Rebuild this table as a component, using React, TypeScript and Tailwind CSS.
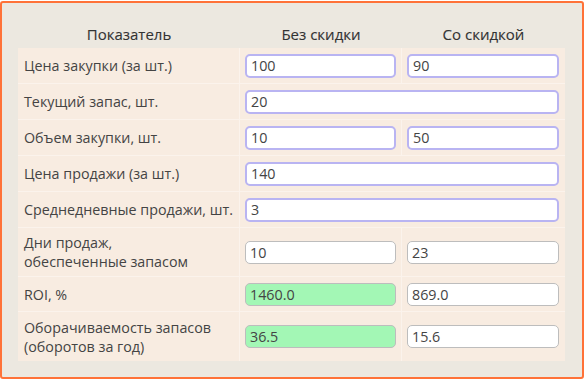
import React from "react";

type Row = {
  label: React.ReactNode;
  h: string;
  a: string;
  b?: string;
  kind: "edit" | "out";
  best?: boolean;
};

const rows: Row[] = [
  { label: "Цена закупки (за шт.)", h: "h-[36px]", a: "100", b: "90", kind: "edit" },
  { label: "Текущий запас, шт.", h: "h-[36px]", a: "20", kind: "edit" },
  { label: "Объем закупки, шт.", h: "h-[36px]", a: "10", b: "50", kind: "edit" },
  { label: "Цена продажи (за шт.)", h: "h-[36px]", a: "140", kind: "edit" },
  { label: "Среднедневные продажи, шт.", h: "h-[36px]", a: "3", kind: "edit" },
  {
    label: (
      <>
        Дни продаж,
        <br />
        обеспеченные запасом
      </>
    ),
    h: "h-[49px]",
    a: "10",
    b: "23",
    kind: "out",
  },
  { label: "ROI, %", h: "h-[35px]", a: "1460.0", b: "869.0", kind: "out", best: true },
  {
    label: (
      <>
        Оборачиваемость запасов
        <br />
        (оборотов за год)
      </>
    ),
    h: "h-[49px]",
    a: "36.5",
    b: "15.6",
    kind: "out",
    best: true,
  },
];

function Field({ value, kind, best }: { value: string; kind: "edit" | "out"; best?: boolean }) {
  const base =
    "w-full px-[4px] text-[14.3px] text-[#444] outline-none font-['Open_Sans',sans-serif]";
  const skin =
    kind === "edit"
      ? "h-[24px] bg-white border-2 border-[#b9b4f2] rounded-[5px]"
      : best
      ? "bg-[#a3f7b5] border-[1.5px] border-[#bdbdbd] rounded-[5px] h-[23px]"
      : "bg-white border-[1.5px] border-[#bdbdbd] rounded-[5px] h-[23px]";
  return <input className={`${base} ${skin}`} defaultValue={value} readOnly={kind === "out"} />;
}

export default function App() {
  return (
    <div className="w-[585px] h-[381px] bg-white font-['Open_Sans',sans-serif]">
      <div className="mt-[1px] w-[584px] h-[378px] border-2 border-[#ff7238] rounded-[3px] bg-[#ece8e0] pt-[16px] pl-[16px]">
        <div className="w-[547px] grid grid-cols-[222px_162px_163px]">
          {/* header */}
          <div className="h-[29px] pt-[2px] flex items-center justify-center text-[15px] text-[#333] [-webkit-text-stroke:0.12px_#333]">
            Показатель
          </div>
          <div className="h-[29px] pt-[2px] flex items-center justify-center text-[15px] text-[#333] [-webkit-text-stroke:0.12px_#333]">
            Без скидки
          </div>
          <div className="h-[29px] pt-[2px] flex items-center justify-center text-[15px] text-[#333] [-webkit-text-stroke:0.12px_#333]">
            Со скидкой
          </div>

          {rows.map((r, i) => {
            const last = i === rows.length - 1;
            const line = last ? "" : "border-b border-[#fbf3ec]";
            return (
              <React.Fragment key={i}>
                <div
                  className={`${r.h} ${line} border-r border-r-[#fbf3ec] bg-[#f8ece1] flex items-center pl-[6px] text-[14.3px] leading-[19px] text-[#444]`}
                >
                  <span>{r.label}</span>
                </div>
                {r.b !== undefined ? (
                  <>
                    <div
                      className={`${r.h} ${line} border-r border-r-[#fbf3ec] bg-[#f8ece1] flex items-center pl-[5px] pr-[5px]`}
                    >
                      <Field value={r.a} kind={r.kind} best={r.best} />
                    </div>
                    <div className={`${r.h} ${line} bg-[#f8ece1] flex items-center pl-[5px] pr-[6px]`}>
                      <Field value={r.b} kind={r.kind} />
                    </div>
                  </>
                ) : (
                  <div className={`${r.h} ${line} col-span-2 bg-[#f8ece1] flex items-center pl-[5px] pr-[6px]`}>
                    <Field value={r.a} kind={r.kind} best={r.best} />
                  </div>
                )}
              </React.Fragment>
            );
          })}
        </div>
      </div>
    </div>
  );
}
